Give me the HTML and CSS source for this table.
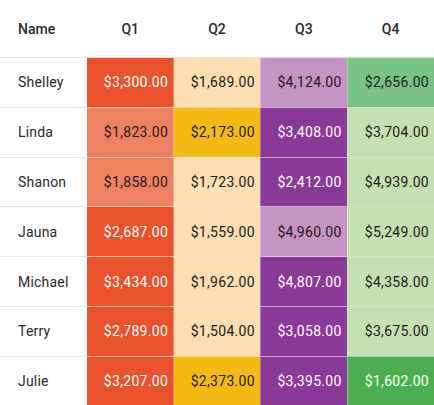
FILE: index.html
```html
<!DOCTYPE html>
<html lang="en">
<head>
<meta charset="utf-8">
<title>Quarterly sales</title>
<link rel="stylesheet" href="styles.css">
</head>
<body>
<table class="grid">
  <colgroup><col><col><col><col><col></colgroup>
  <thead>
    <tr><th class="name-h">Name</th><th>Q1</th><th>Q2</th><th>Q3</th><th>Q4</th></tr>
  </thead>
  <tbody>
    <tr><td class="name">Shelley</td><td class="v q1-hi">$3,300.00</td><td class="v q2-lo">$1,689.00</td><td class="v q3-lo">$4,124.00</td><td class="v q4-mid">$2,656.00</td></tr>
    <tr><td class="name">Linda</td><td class="v q1-lo">$1,823.00</td><td class="v q2-hi">$2,173.00</td><td class="v q3-hi">$3,408.00</td><td class="v q4-lo">$3,704.00</td></tr>
    <tr><td class="name">Shanon</td><td class="v q1-lo">$1,858.00</td><td class="v q2-lo">$1,723.00</td><td class="v q3-hi">$2,412.00</td><td class="v q4-lo">$4,939.00</td></tr>
    <tr><td class="name">Jauna</td><td class="v q1-hi">$2,687.00</td><td class="v q2-lo">$1,559.00</td><td class="v q3-lo">$4,960.00</td><td class="v q4-lo">$5,249.00</td></tr>
    <tr><td class="name">Michael</td><td class="v q1-hi">$3,434.00</td><td class="v q2-lo">$1,962.00</td><td class="v q3-hi">$4,807.00</td><td class="v q4-lo">$4,358.00</td></tr>
    <tr><td class="name">Terry</td><td class="v q1-hi">$2,789.00</td><td class="v q2-lo">$1,504.00</td><td class="v q3-hi">$3,058.00</td><td class="v q4-lo">$3,675.00</td></tr>
    <tr><td class="name">Julie</td><td class="v q1-hi">$3,207.00</td><td class="v q2-hi">$2,373.00</td><td class="v q3-hi">$3,395.00</td><td class="v q4-hi">$1,602.00</td></tr>
  </tbody>
</table>
</body>
</html>
```
FILE: styles.css
```css
html, body {
  margin: 0;
  padding: 0;
  background: #fff;
}
body {
  font-family: Roboto, "Liberation Sans", Arial, sans-serif;
  color: #222;
}
.grid {
  width: 434px;
  table-layout: fixed;
  border-collapse: collapse;
  border-spacing: 0;
}
.grid th {
  height: 57px;
  padding: 0;
  font-size: 14px;
  font-weight: 500;
  color: #2a2a2a;
  text-align: center;
  border-bottom: 1px solid #e0e0e0;
}
.grid th.name-h {
  text-align: left;
  padding-left: 18px;
}
.grid td {
  height: 48.8px;
  padding: 0;
  font-size: 14px;
  border-bottom: 1px solid rgba(224, 224, 224, 0.7);
}
.grid tbody tr:last-child td {
  border-bottom: none;
}
.name {
  padding-left: 18px !important;
  color: #2a2a2a;
  letter-spacing: 0.2px;
}
.v {
  text-align: right;
  padding-right: 5px !important;
  letter-spacing: 0.3px;
  border-left: 1px solid rgba(255, 255, 255, 0.3);
  color: #1f1a17;
}
.q1-hi { background: #e9522c; color: #fff; }
.q1-lo { background: #ef8163; }
.q2-hi { background: #f6ba17; }
.q2-lo { background: #fbdeb2; }
.q3-hi { background: #893a96; color: #fff; }
.q3-lo { background: #c593c4; }
.q4-hi { background: #4cae50; color: #fff; }
.q4-mid { background: #7ac285; }
.q4-lo { background: #c5e0b1; }
```
